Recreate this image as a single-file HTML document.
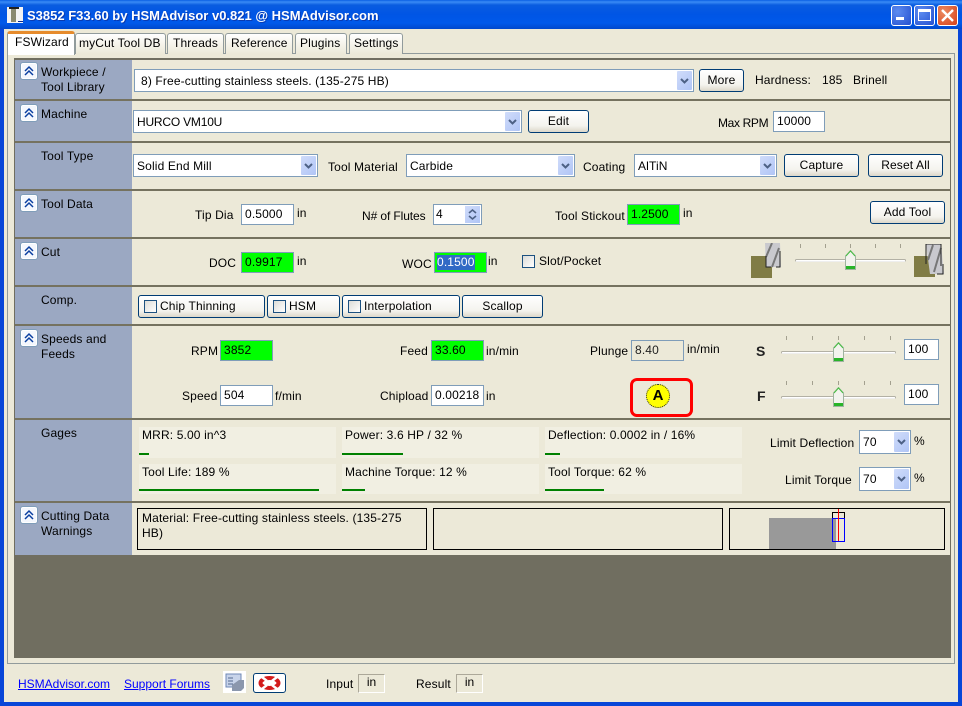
<!DOCTYPE html>
<html><head><meta charset="utf-8"><style>
*{box-sizing:border-box}
html,body{margin:0;padding:0;width:962px;height:706px;overflow:hidden;background:#ece9d8}
body{position:relative;font:12px/14px "Liberation Sans",sans-serif;color:#000}
div,a,span.a{position:absolute}
.t{white-space:nowrap;letter-spacing:.14px}
.i{border:1px solid #7f9db9;background:#fff;padding-left:3px;line-height:19px;white-space:nowrap;letter-spacing:.14px;height:21px;width:53px}
.g{background:#0f0}
.c{border:1px solid #7f9db9;background:#fff;height:23px;padding-left:3px;line-height:23px;white-space:nowrap;letter-spacing:.14px}
.ar{right:1px;top:1px;bottom:1px;width:15px;background:linear-gradient(135deg,#d0dcfa,#b0c5f6);border-radius:1px}
.ar svg,.cb svg{position:absolute;left:3px;top:50%;margin-top:-3px}
.b{border:1px solid #003c74;border-radius:3px;background:linear-gradient(#fff,#f4f3ee 70%,#dcd8ca);text-align:center;line-height:21px;height:23px;letter-spacing:.14px;white-space:nowrap}
.bl{text-align:left;padding-left:21px}
.cb{left:20px;width:18px;height:18px;border:1px solid #7f9db9;border-radius:3px;background:#f4f7fd;box-shadow:inset 0 0 0 1px #fff}
.s{left:15px;width:936px;height:2px;background:#75725f}
.ck{width:13px;height:13px;border:1px solid #1c5180;background:linear-gradient(135deg,#dcdcd7,#fff)}
.cell{background:#f1efe2;width:197px;height:31px}
.bar{height:2px;background:#008000}
.wb{border:1px solid #000;height:42px;background:#ece9d8}
.tick{width:1px;height:4px;background:#a3a08f}
.tr{height:3px;background:#fff;border:1px solid #b3b1a5;border-bottom-color:#eee;border-radius:2px}
</style></head><body>

<div style="left:0;top:0;width:962px;height:29px;background:linear-gradient(#0a5fe4 0,#3a8bf5 2px,#0a5ce0 5px,#0055e5 50%,#0059ea 80%,#0048cc 100%)"></div>
<div style="left:0;top:29px;width:4px;height:677px;background:#0846d8"></div>
<div style="left:958px;top:29px;width:4px;height:677px;background:#0846d8"></div>
<div style="left:0;top:702px;width:962px;height:4px;background:#0846d8"></div>

<div style="left:7px;top:7px;width:16px;height:16px;background:#f4f4f4"></div>
<div style="left:9px;top:7px;width:10px;height:2px;background:#222"></div>
<div style="left:11px;top:9px;width:5px;height:13px;background:#8a8a70"></div>
<div style="left:18px;top:21px;width:5px;height:1px;background:#0a2a90"></div>
<div class="t" style="left:27px;top:8px;color:#fff;font-weight:bold;font-size:13px;line-height:16px;letter-spacing:0;text-shadow:1px 1px #0a3ab0">S3852 F33.60 by HSMAdvisor v0.821 @ HSMAdvisor.com</div>

<div style="left:891px;top:5px;width:21px;height:21px;border:1px solid #fff;border-radius:3px;background:radial-gradient(circle at 30% 30%,#5d8cf0,#2450d0)"></div>
<div style="left:896px;top:17px;width:8px;height:3px;background:#fff"></div>
<div style="left:914px;top:5px;width:21px;height:21px;border:1px solid #fff;border-radius:3px;background:radial-gradient(circle at 30% 30%,#5d8cf0,#2450d0)"></div>
<div style="left:918px;top:9px;width:13px;height:12px;border:1px solid #fff;border-top-width:3px"></div>
<div style="left:937px;top:5px;width:21px;height:21px;border:1px solid #fff;border-radius:3px;background:radial-gradient(circle at 30% 30%,#ec8a60,#d5401a)"></div>
<svg style="position:absolute;left:937px;top:5px" width="21" height="21"><path d="M5 5L16 16M16 5L5 16" stroke="#fff" stroke-width="2.4"/></svg>

<!-- tabs -->
<div style="left:7px;top:53px;width:948px;height:611px;border:1px solid #919b9c;background:#fcfcfe"></div>
<div style="left:8px;top:54px;width:946px;height:609px;background:#ece9d8"></div>
<div style="left:75px;top:33px;width:91px;height:21px;border:1px solid #919b9c;border-bottom:0;border-radius:3px 3px 0 0;background:linear-gradient(#fff,#ece9d8)"></div>
<div class="t" style="left:79px;top:36px">myCut Tool DB</div>
<div style="left:167px;top:33px;width:57px;height:21px;border:1px solid #919b9c;border-bottom:0;border-radius:3px 3px 0 0;background:linear-gradient(#fff,#ece9d8)"></div>
<div class="t" style="left:173px;top:36px">Threads</div>
<div style="left:225px;top:33px;width:68px;height:21px;border:1px solid #919b9c;border-bottom:0;border-radius:3px 3px 0 0;background:linear-gradient(#fff,#ece9d8)"></div>
<div class="t" style="left:231px;top:36px">Reference</div>
<div style="left:295px;top:33px;width:52px;height:21px;border:1px solid #919b9c;border-bottom:0;border-radius:3px 3px 0 0;background:linear-gradient(#fff,#ece9d8)"></div>
<div class="t" style="left:300px;top:36px">Plugins</div>
<div style="left:349px;top:33px;width:54px;height:21px;border:1px solid #919b9c;border-bottom:0;border-radius:3px 3px 0 0;background:linear-gradient(#fff,#ece9d8)"></div>
<div class="t" style="left:354px;top:36px">Settings</div>
<div style="left:7px;top:31px;width:68px;height:24px;border:1px solid #919b9c;border-top:3px solid #e68b2c;border-bottom:0;border-radius:3px 3px 0 0;background:#fff"></div>
<div class="t" style="left:15px;top:35px">FSWizard</div>

<!-- main panel -->
<div style="left:14px;top:58px;width:937px;height:600px;background:#706e60"></div>
<div style="left:15px;top:60px;width:935px;height:495px;background:#ece9d8"></div>
<div style="left:15px;top:60px;width:117px;height:495px;background:#9ba8c2"></div>
<div class="s" style="top:99px"></div><div class="s" style="top:141px"></div><div class="s" style="top:189px"></div><div class="s" style="top:237px"></div><div class="s" style="top:285px"></div><div class="s" style="top:324px"></div><div class="s" style="top:418px"></div><div class="s" style="top:501px"></div>

<!-- collapse buttons -->
<div class="cb" style="top:62px"><svg width="12" height="12" style="position:absolute;left:2px;top:2px;margin:0"><path d="M2 6L6 2L10 6M2 10L6 6L10 10" fill="none" stroke="#0a3fa0" stroke-width="1.5"/></svg></div>
<div class="cb" style="top:104px"><svg width="12" height="12" style="position:absolute;left:2px;top:2px;margin:0"><path d="M2 6L6 2L10 6M2 10L6 6L10 10" fill="none" stroke="#0a3fa0" stroke-width="1.5"/></svg></div>
<div class="cb" style="top:194px"><svg width="12" height="12" style="position:absolute;left:2px;top:2px;margin:0"><path d="M2 6L6 2L10 6M2 10L6 6L10 10" fill="none" stroke="#0a3fa0" stroke-width="1.5"/></svg></div>
<div class="cb" style="top:242px"><svg width="12" height="12" style="position:absolute;left:2px;top:2px;margin:0"><path d="M2 6L6 2L10 6M2 10L6 6L10 10" fill="none" stroke="#0a3fa0" stroke-width="1.5"/></svg></div>
<div class="cb" style="top:329px"><svg width="12" height="12" style="position:absolute;left:2px;top:2px;margin:0"><path d="M2 6L6 2L10 6M2 10L6 6L10 10" fill="none" stroke="#0a3fa0" stroke-width="1.5"/></svg></div>
<div class="cb" style="top:506px"><svg width="12" height="12" style="position:absolute;left:2px;top:2px;margin:0"><path d="M2 6L6 2L10 6M2 10L6 6L10 10" fill="none" stroke="#0a3fa0" stroke-width="1.5"/></svg></div>

<!-- left labels -->
<div class="t" style="left:41px;top:65px">Workpiece /</div>
<div class="t" style="left:41px;top:80px">Tool Library</div>
<div class="t" style="left:41px;top:107px">Machine</div>
<div class="t" style="left:41px;top:149px">Tool Type</div>
<div class="t" style="left:41px;top:197px">Tool Data</div>
<div class="t" style="left:41px;top:245px">Cut</div>
<div class="t" style="left:41px;top:293px">Comp.</div>
<div class="t" style="left:41px;top:332px">Speeds and</div>
<div class="t" style="left:41px;top:347px">Feeds</div>
<div class="t" style="left:41px;top:426px">Gages</div>
<div class="t" style="left:41px;top:509px">Cutting Data</div>
<div class="t" style="left:41px;top:524px">Warnings</div>

<!-- row 1 -->
<div class="c" style="left:134px;top:69px;width:560px;padding-left:6px">8) Free-cutting stainless steels. (135-275 HB)<div class="ar"><svg width="9" height="6"><path d="M1 1L4.5 4.5L8 1" fill="none" stroke="#4d6185" stroke-width="2"/></svg></div></div>
<div class="b" style="left:699px;top:69px;width:45px">More</div>
<div class="t" style="left:755px;top:73px">Hardness:</div>
<div class="t" style="left:822px;top:73px">185</div>
<div class="t" style="left:853px;top:73px">Brinell</div>

<!-- row 2 -->
<div class="c" style="left:133px;top:110px;width:389px;letter-spacing:-.2px">HURCO VM10U<div class="ar"><svg width="9" height="6"><path d="M1 1L4.5 4.5L8 1" fill="none" stroke="#4d6185" stroke-width="2"/></svg></div></div>
<div class="b" style="left:528px;top:110px;width:61px">Edit</div>
<div class="t" style="left:718px;top:116px;letter-spacing:-.35px">Max RPM</div>
<div class="i" style="left:773px;top:111px;width:52px">10000</div>

<!-- row 3 -->
<div class="c" style="left:133px;top:154px;width:185px">Solid End Mill<div class="ar"><svg width="9" height="6"><path d="M1 1L4.5 4.5L8 1" fill="none" stroke="#4d6185" stroke-width="2"/></svg></div></div>
<div class="t" style="left:328px;top:160px">Tool Material</div>
<div class="c" style="left:406px;top:154px;width:169px">Carbide<div class="ar"><svg width="9" height="6"><path d="M1 1L4.5 4.5L8 1" fill="none" stroke="#4d6185" stroke-width="2"/></svg></div></div>
<div class="t" style="left:583px;top:160px">Coating</div>
<div class="c" style="left:634px;top:154px;width:143px">AlTiN<div class="ar"><svg width="9" height="6"><path d="M1 1L4.5 4.5L8 1" fill="none" stroke="#4d6185" stroke-width="2"/></svg></div></div>
<div class="b" style="left:784px;top:154px;width:75px">Capture</div>
<div class="b" style="left:868px;top:154px;width:75px">Reset All</div>

<!-- row 4 -->
<div class="t" style="left:195px;top:208px">Tip Dia</div>
<div class="i" style="left:241px;top:204px">0.5000</div>
<div class="t" style="left:297px;top:206px">in</div>
<div class="t" style="left:362px;top:209px;letter-spacing:-.1px">N# of Flutes</div>
<div class="i" style="left:433px;top:204px;width:49px;padding-left:2px">4<div style="right:1px;top:1px;width:15px;height:17px;background:linear-gradient(135deg,#d0dcfa,#b0c5f6)"><svg width="15" height="17" style="position:absolute;left:0;top:0"><path d="M4 7L7.5 4L11 7M4 10L7.5 13L11 10" fill="none" stroke="#4d6185" stroke-width="1.6"/></svg></div></div>
<div class="t" style="left:555px;top:209px">Tool Stickout</div>
<div class="i g" style="left:627px;top:204px">1.2500</div>
<div class="t" style="left:683px;top:206px">in</div>
<div class="b" style="left:870px;top:201px;width:75px">Add Tool</div>

<!-- row 5 -->
<div class="t" style="left:209px;top:256px">DOC</div>
<div class="i g" style="left:241px;top:252px">0.9917</div>
<div class="t" style="left:297px;top:254px">in</div>
<div class="t" style="left:402px;top:257px">WOC</div>
<div style="left:434px;top:252px;width:53px;height:21px;background:#0f0;border:1px solid #7f9db9"></div>
<div style="left:437px;top:255px;width:38px;height:15px;background:#316ac5;color:#fff;line-height:14px;letter-spacing:.14px">0.1500</div>
<div class="t" style="left:488px;top:254px">in</div>
<div class="ck" style="left:522px;top:255px"></div>
<div class="t" style="left:539px;top:254px">Slot/Pocket</div>

<div style="left:751px;top:256px;width:21px;height:22px;background:#807c45"></div>
<svg style="position:absolute;left:763px;top:243px" width="18" height="25"><path d="M2 0H17L18 24H3Z" fill="#c9c9ce"/><path d="M9 0L3 14M16 5L9 24" stroke="#777" stroke-width="2" fill="none"/><path d="M17 8V24H13M3 13V24H8" stroke="#222" fill="none"/></svg>
<div style="left:914px;top:256px;width:21px;height:21px;background:#807c45"></div>
<svg style="position:absolute;left:925px;top:244px" width="20" height="31"><path d="M1 0H16L19 30H5Z" fill="#c9c9ce"/><path d="M8 1L3 16M16 4L9 28" stroke="#777" stroke-width="2" fill="none"/><path d="M1 0H16V22M1 0V20M18 20V30H12" stroke="#222" fill="none"/></svg>

<div class="tick" style="left:800px;top:244px"></div><div class="tick" style="left:825px;top:244px"></div><div class="tick" style="left:850px;top:244px"></div><div class="tick" style="left:875px;top:244px"></div><div class="tick" style="left:900px;top:244px"></div>
<div class="tr" style="left:795px;top:259px;width:111px"></div>
<svg style="position:absolute;left:845px;top:250px" width="11" height="20"><path d="M.5 6L5.5 .5L10.5 6V19.5H.5Z" fill="#f3f3ee" stroke="#9fb39f"/><path d="M1 6L5.5 1L10 6" fill="none" stroke="#45c040"/><rect x="1" y="16" width="9" height="3" fill="#28b428"/></svg>

<!-- row 6 -->
<div class="b bl" style="left:138px;top:295px;width:127px">Chip Thinning</div>
<div class="b bl" style="left:267px;top:295px;width:73px">HSM</div>
<div class="b bl" style="left:342px;top:295px;width:118px">Interpolation</div>
<div class="b" style="left:462px;top:295px;width:81px">Scallop</div>
<div class="ck" style="left:144px;top:300px"></div>
<div class="ck" style="left:273px;top:300px"></div>
<div class="ck" style="left:348px;top:300px"></div>

<!-- row 7 -->
<div class="t" style="left:191px;top:344px">RPM</div>
<div class="i g" style="left:220px;top:340px">3852</div>
<div class="t" style="left:400px;top:344px">Feed</div>
<div class="i g" style="left:431px;top:340px">33.60</div>
<div class="t" style="left:486px;top:344px">in/min</div>
<div class="t" style="left:590px;top:344px">Plunge</div>
<div class="i" style="left:631px;top:340px;background:#ece9d8;color:#222">8.40</div>
<div class="t" style="left:687px;top:342px">in/min</div>
<div class="t" style="left:756px;top:344px;font:bold 14px/14px 'Liberation Sans',sans-serif;color:#222">S</div>

<div class="tick" style="left:786px;top:336px"></div><div class="tick" style="left:812px;top:336px"></div><div class="tick" style="left:838px;top:336px"></div><div class="tick" style="left:864px;top:336px"></div><div class="tick" style="left:890px;top:336px"></div>
<div class="tr" style="left:781px;top:351px;width:115px"></div>
<svg style="position:absolute;left:833px;top:342px" width="11" height="20"><path d="M.5 6L5.5 .5L10.5 6V19.5H.5Z" fill="#f3f3ee" stroke="#9fb39f"/><path d="M1 6L5.5 1L10 6" fill="none" stroke="#45c040"/><rect x="1" y="16" width="9" height="3" fill="#28b428"/></svg>
<div class="i" style="left:904px;top:339px;width:35px">100</div>

<div class="t" style="left:182px;top:389px">Speed</div>
<div class="i" style="left:220px;top:385px">504</div>
<div class="t" style="left:275px;top:389px">f/min</div>
<div class="t" style="left:380px;top:389px">Chipload</div>
<div class="i" style="left:431px;top:385px">0.00218</div>
<div class="t" style="left:486px;top:389px">in</div>
<div style="left:630px;top:378px;width:63px;height:39px;border:3px solid #f00;border-radius:7px"></div>
<div style="left:646px;top:384px;width:24px;height:24px;border-radius:50%;background:#ff0;border:1px dotted #223;text-align:center;font:bold 15px/22px 'Liberation Sans',sans-serif">A</div>
<div class="t" style="left:757px;top:389px;font:bold 14px/14px 'Liberation Sans',sans-serif;color:#222">F</div>

<div class="tick" style="left:786px;top:381px"></div><div class="tick" style="left:812px;top:381px"></div><div class="tick" style="left:838px;top:381px"></div><div class="tick" style="left:864px;top:381px"></div><div class="tick" style="left:890px;top:381px"></div>
<div class="tr" style="left:781px;top:396px;width:115px"></div>
<svg style="position:absolute;left:833px;top:387px" width="11" height="20"><path d="M.5 6L5.5 .5L10.5 6V19.5H.5Z" fill="#f3f3ee" stroke="#9fb39f"/><path d="M1 6L5.5 1L10 6" fill="none" stroke="#45c040"/><rect x="1" y="16" width="9" height="3" fill="#28b428"/></svg>
<div class="i" style="left:904px;top:384px;width:35px">100</div>

<!-- gages -->
<div class="cell" style="left:139px;top:427px"></div><div class="cell" style="left:342px;top:427px"></div><div class="cell" style="left:545px;top:427px"></div>
<div class="cell" style="left:139px;top:464px;height:30px"></div><div class="cell" style="left:342px;top:464px;height:30px"></div><div class="cell" style="left:545px;top:464px;height:30px"></div>
<div class="t" style="left:142px;top:428px">MRR: 5.00 in^3</div>
<div class="t" style="left:345px;top:428px">Power: 3.6 HP / 32 %</div>
<div class="t" style="left:548px;top:428px">Deflection: 0.0002 in / 16%</div>
<div class="t" style="left:142px;top:465px">Tool Life: 189 %</div>
<div class="t" style="left:345px;top:465px">Machine Torque: 12 %</div>
<div class="t" style="left:548px;top:465px">Tool Torque: 62 %</div>
<div class="bar" style="left:139px;top:453px;width:10px"></div>
<div class="bar" style="left:342px;top:453px;width:61px"></div>
<div class="bar" style="left:545px;top:453px;width:15px"></div>
<div class="bar" style="left:139px;top:489px;width:180px"></div>
<div class="bar" style="left:342px;top:489px;width:23px"></div>
<div class="bar" style="left:545px;top:489px;width:59px"></div>

<div class="t" style="left:770px;top:436px">Limit Deflection</div>
<div class="c" style="left:859px;top:430px;width:52px;height:24px">70<div class="ar" style="width:15px"><svg width="9" height="6"><path d="M1 1L4.5 4.5L8 1" fill="none" stroke="#4d6185" stroke-width="2"/></svg></div></div>
<div class="t" style="left:914px;top:434px">%</div>
<div class="t" style="left:785px;top:473px">Limit Torque</div>
<div class="c" style="left:859px;top:467px;width:52px;height:24px">70<div class="ar" style="width:15px"><svg width="9" height="6"><path d="M1 1L4.5 4.5L8 1" fill="none" stroke="#4d6185" stroke-width="2"/></svg></div></div>
<div class="t" style="left:914px;top:471px">%</div>

<!-- warnings -->
<div class="wb" style="left:137px;top:508px;width:290px"></div>
<div class="t" style="left:142px;top:511px">Material: Free-cutting stainless steels. (135-275</div>
<div class="t" style="left:142px;top:526px">HB)</div>
<div class="wb" style="left:433px;top:508px;width:290px"></div>
<div class="wb" style="left:729px;top:508px;width:216px"></div>
<div style="left:769px;top:518px;width:67px;height:31px;background:#999"></div>
<div style="left:832px;top:512px;width:13px;height:7px;border:1px solid #000"></div>
<div style="left:832px;top:518px;width:13px;height:24px;border:1px solid #00f"></div>
<div style="left:838px;top:509px;width:1px;height:32px;background:#f00"></div>

<!-- bottom -->
<a class="t" style="left:18px;top:677px;color:#00f;text-decoration:underline;letter-spacing:0">HSMAdvisor.com</a>
<a class="t" style="left:124px;top:677px;color:#00f;text-decoration:underline;letter-spacing:0">Support Forums</a>
<div style="left:223px;top:671px;width:23px;height:22px;background:#fff"></div>
<svg style="position:absolute;left:225px;top:673px" width="20" height="19"><rect x="1" y="1" width="15" height="13" fill="#c8d4ea" stroke="#6f88b5"/><path d="M3 5H8M3 8H8M3 11H8" stroke="#55698f"/><path d="M7 12L14 7H19V15L16 18H7Z" fill="#8b97ad"/></svg>
<div class="b" style="left:253px;top:673px;width:33px;height:20px;background:#fff"></div>
<svg style="position:absolute;left:257px;top:675px" width="25" height="16"><ellipse cx="12.5" cy="8" rx="9" ry="5" fill="#fff" stroke="#d31c1c" stroke-width="4"/><path d="M5 2L10 6M20 2L15 6M5 14L10 10M20 14L15 10" stroke="#fff" stroke-width="2.5"/></svg>
<div class="t" style="left:326px;top:677px">Input</div>
<div style="left:358px;top:674px;width:27px;height:19px;border:1px solid;border-color:#aca899 #fff #fff #aca899;text-align:center;line-height:15px">in</div>
<div class="t" style="left:416px;top:677px">Result</div>
<div style="left:456px;top:674px;width:27px;height:19px;border:1px solid;border-color:#aca899 #fff #fff #aca899;text-align:center;line-height:15px">in</div>

</body></html>
